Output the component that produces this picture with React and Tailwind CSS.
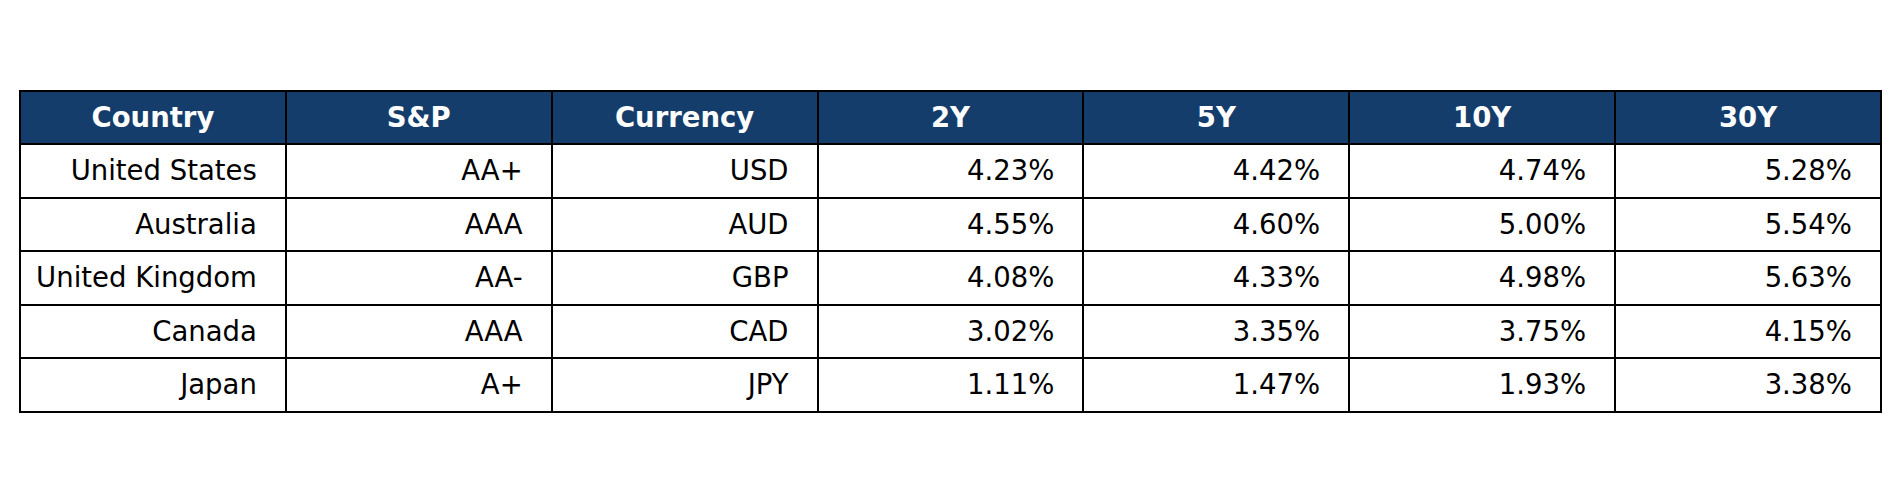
export default function App() {
  const headers = ["Country", "S&P", "Currency", "2Y", "5Y", "10Y", "30Y"];
  const rows = [
    ["United States", "AA+", "USD", "4.23%", "4.42%", "4.74%", "5.28%"],
    ["Australia", "AAA", "AUD", "4.55%", "4.60%", "5.00%", "5.54%"],
    ["United Kingdom", "AA-", "GBP", "4.08%", "4.33%", "4.98%", "5.63%"],
    ["Canada", "AAA", "CAD", "3.02%", "3.35%", "3.75%", "4.15%"],
    ["Japan", "A+", "JPY", "1.11%", "1.47%", "1.93%", "3.38%"],
  ];
  return (
    <div className="w-[1899px] h-[502px] bg-white pt-[90px] pl-[19px]" style={{ fontFamily: '"DejaVu Sans", sans-serif' }}>
      <table className="table-fixed border-collapse w-[1863px] text-[27.5px] leading-none">
        <thead>
          <tr className="h-[53px]">
            {headers.map((h) => (
              <th key={h} className="border-2 border-black bg-[#143d6b] text-white font-bold text-center p-0 align-middle">
                {h}
              </th>
            ))}
          </tr>
        </thead>
        <tbody>
          {rows.map((r, i) => (
            <tr key={i} className="h-[53.5px]">
              {r.map((c, j) => (
                <td key={j} className="border-2 border-black text-black text-right pr-[28px] pl-0 py-0 align-middle whitespace-nowrap">
                  {c}
                </td>
              ))}
            </tr>
          ))}
        </tbody>
      </table>
    </div>
  );
}
